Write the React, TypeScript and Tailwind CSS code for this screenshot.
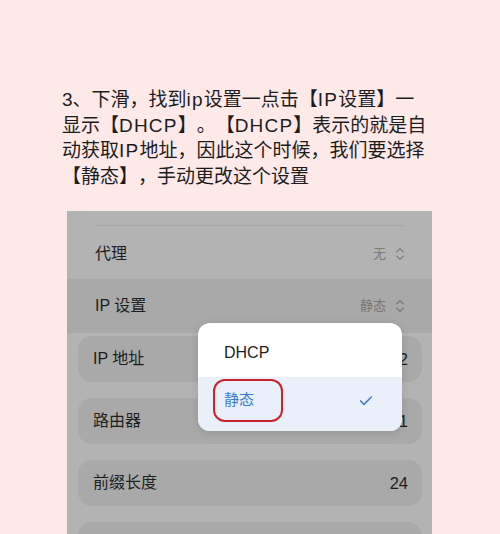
import { ChevronsUpDown, Check } from "lucide-react";

const FONT = { fontFamily: '"Liberation Sans", "Noto Sans CJK SC", sans-serif' };

// latin runs are wrapped so they get a little extra tracking like the source image
const LINES: (string | [string])[][] = [
  ["3、下滑，找到", ["ip"], "设置一点击【", ["IP"], "设置】一"],
  ["显示【", ["DHCP"], "】。【", ["DHCP"], "】表示的就是自"],
  ["动获取", ["IP"], "地址，因此这个时候，我们要选择"],
  ["【静态】，手动更改这个设置"],
];

const CARDS = [
  { label: "IP 地址", value: "2" },
  { label: "路由器", value: "1" },
  { label: "前缀长度", value: "24" },
  { label: "", value: "" },
];

export default function App() {
  return (
    <div
      className="h-[534px] w-[500px] overflow-hidden bg-[#fee9e9] pt-[87px]"
      style={FONT}
    >
      <div className="pl-[62px] text-[19px] leading-[25.5px] text-[#1c1c1c] [text-spacing-trim:space-all]">
        {LINES.map((l, i) => (
          <div key={i} className="whitespace-nowrap">
            {l.map((s, j) =>
              typeof s === "string" ? (
                <span key={j}>{s}</span>
              ) : (
                <span key={j} className="tracking-[1.2px]">
                  {s[0]}
                </span>
              )
            )}
          </div>
        ))}
      </div>

      <div className="relative ml-[67px] mt-[22px] h-[330px] w-[365px] overflow-hidden bg-[#b3b3b3]">
        <div className="pt-[14px]">
          <div className="mx-[28px] h-px bg-[#a6a6a6]" />
          <div className="flex h-[53px] items-center justify-between pl-[28px] pr-[24px] pt-[2px]">
            <span className="text-[16px] text-[#1e1e1e]">代理</span>
            <span className="flex items-center gap-[6px] text-[13px] text-[#7a7a7a]">
              无
              <ChevronsUpDown size={16} strokeWidth={1.7} className="text-[#7c7c7c]" />
            </span>
          </div>
          <div className="flex h-[54px] items-center justify-between bg-[#a9a9a9] pl-[28px] pr-[24px]">
            <span className="text-[16px] text-[#1e1e1e]">IP 设置</span>
            <span className="flex items-center gap-[6px] text-[13px] text-[#757575]">
              静态
              <ChevronsUpDown size={16} strokeWidth={1.7} className="text-[#777]" />
            </span>
          </div>
          <div className="mt-[3px] flex flex-col gap-[16px] pl-[11px] pr-[10px]">
            {CARDS.map((c, i) => (
              <div
                key={i}
                className="flex h-[46px] items-center justify-between rounded-[14px] bg-[#a9a9a9] pl-[15px] pr-[14px]"
              >
                <span className="text-[16px] text-[#1e1e1e]">{c.label}</span>
                <span className="text-[16.5px] text-[#1e1e1e]">{c.value}</span>
              </div>
            ))}
          </div>
        </div>

        <div className="absolute left-[131px] top-[112px] w-[204px] overflow-hidden rounded-[12px] bg-white shadow-[0_2px_8px_rgba(0,0,0,0.12)]">
          <div className="flex h-[54px] items-center pl-[26px] pt-[6px] text-[16px] text-[#1e1e1e]">
            DHCP
          </div>
          <div className="relative flex h-[54px] items-center justify-between bg-[#eaf0f9] pb-[7px] pl-[26px] pr-[28px] text-[15px] text-[#3b7bcc]">
            <span>静态</span>
            <Check size={16} strokeWidth={2.5} className="text-[#4a7fc4]" />
            <div className="absolute left-[15px] top-[2px] h-[43px] w-[70px] rounded-[12px] border-[2.5px] border-[#c9232e]" />
          </div>
        </div>
      </div>
    </div>
  );
}
